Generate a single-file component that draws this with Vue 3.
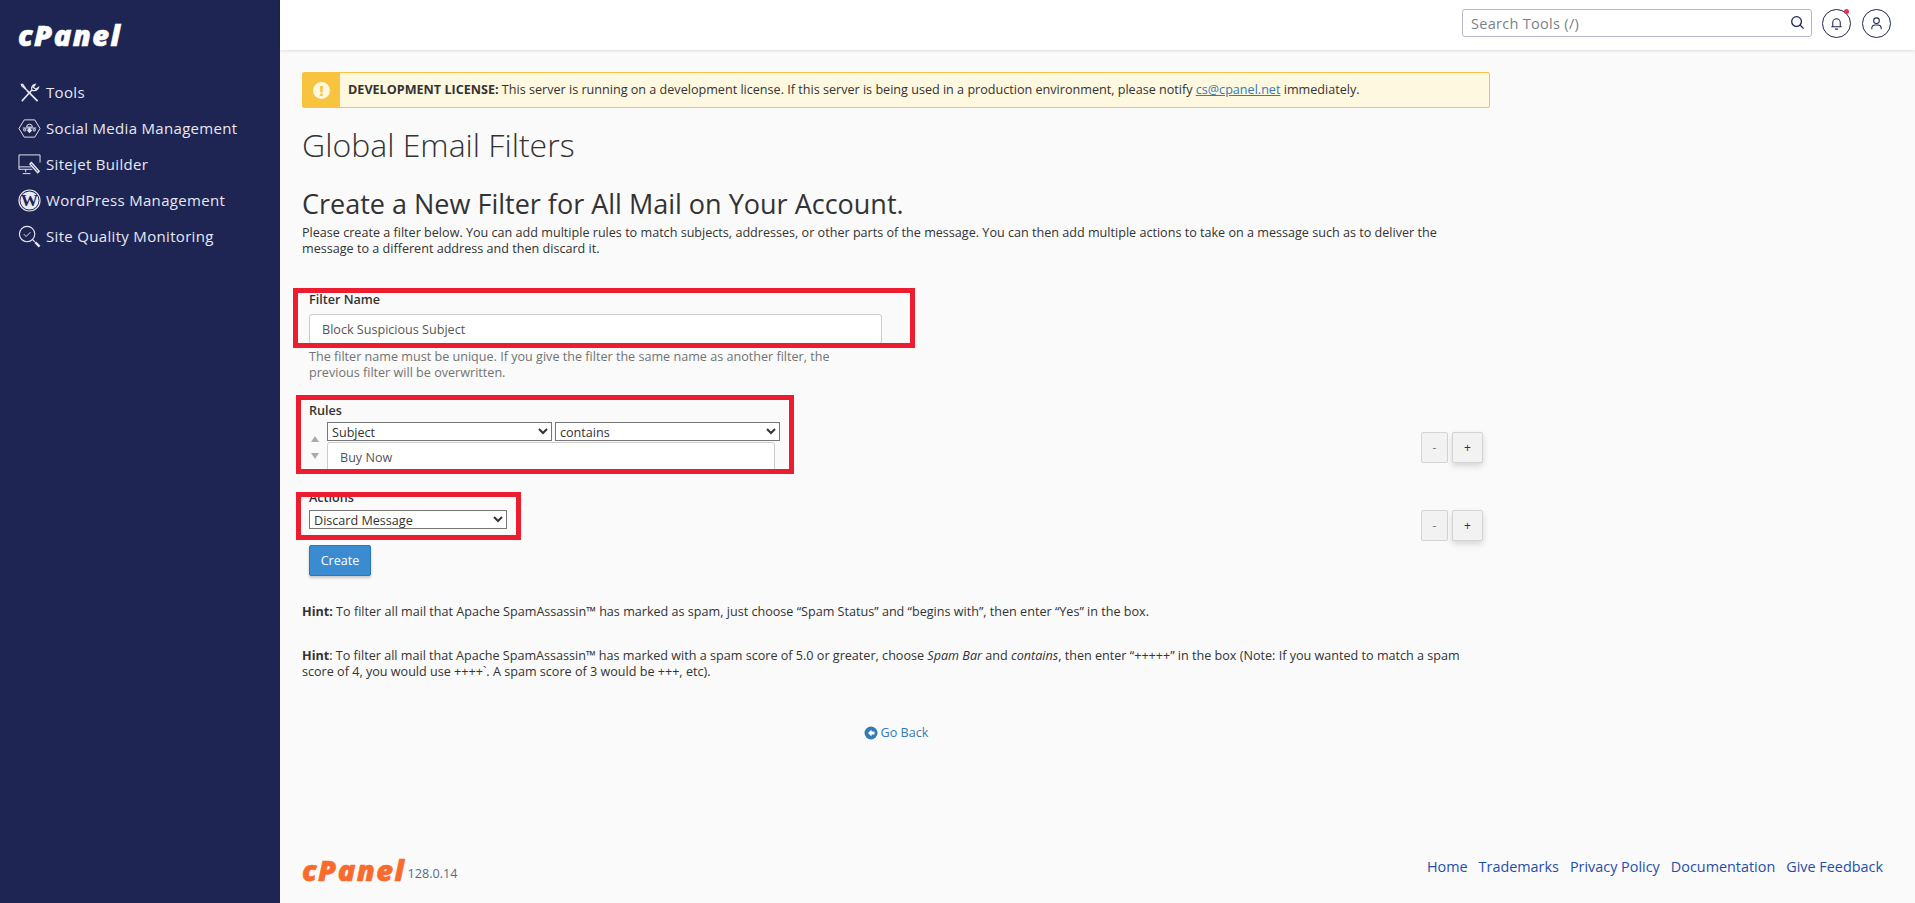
<template>
  <div class="layout">
    <aside class="sidebar">
      <div class="logo">cPanel</div>
      <nav class="nav">
        <a v-for="item in navItems" :key="item.label" class="nav-item" href="#">
          <svg class="nav-icon" viewBox="0 0 24 24" fill="none" stroke="#e6e8f2" stroke-width="1" v-html="item.icon"></svg>
          <span>{{ item.label }}</span>
        </a>
      </nav>
    </aside>

    <div class="main">
      <header class="topbar">
        <div class="search">
          <input type="text" placeholder="Search Tools (/)" />
          <svg viewBox="0 0 16 16" fill="none" stroke="#1f2552" stroke-width="1.4">
            <circle cx="7" cy="7" r="5.2" />
            <path d="M11 11l3.5 3.5" />
          </svg>
        </div>
        <button class="round-btn">
          <svg viewBox="0 0 16 16" fill="none" stroke="#1f2552" stroke-width="1.1">
            <path d="M4 11.5V7a4 4 0 0 1 8 0v4.500M2.500 11.500h11M6.500 14h3" />
          </svg>
          <span class="dot"></span>
        </button>
        <button class="round-btn">
          <svg viewBox="0 0 16 16" fill="none" stroke="#1f2552" stroke-width="1.1">
            <circle cx="8" cy="5" r="3" />
            <path d="M3 14v-1.500a3.500 3.500 0 0 1 3.500-3h3a3.500 3.500 0 0 1 3.500 3V14" />
          </svg>
        </button>
      </header>

      <main class="content">
        <div class="alert">
          <div class="alert-icon"><span>!</span></div>
          <p>
            <strong>DEVELOPMENT LICENSE:</strong> This server is running on a development license. If this server is being used in a production environment, please notify
            <a href="#">cs@cpanel.net</a> immediately.
          </p>
        </div>

        <h1>Global Email Filters</h1>
        <h2>Create a New Filter for All Mail on Your Account.</h2>
        <p class="intro">
          Please create a filter below. You can add multiple rules to match subjects, addresses, or other parts of the message. You can then add multiple actions to take on a message such as to deliver the message to a different address and then discard it.
        </p>

        <form class="form" @submit.prevent>
          <div class="field field-name">
            <label>Filter Name</label>
            <input v-model="filterName" class="text-input" type="text" />
            <p class="help">The filter name must be unique. If you give the filter the same name as another filter, the previous filter will be overwritten.</p>
            <span class="mark mark-name"></span>
          </div>

          <div class="field field-rules">
            <label>Rules</label>
            <div class="rule-row">
              <div class="arrows">
                <span class="up"></span>
                <span class="down"></span>
              </div>
              <div class="rule-body">
                <div class="selects">
                  <select v-model="ruleSubject">
                    <option>Subject</option>
                    <option>From</option>
                    <option>To</option>
                  </select>
                  <select v-model="ruleMatch">
                    <option>contains</option>
                    <option>begins with</option>
                  </select>
                </div>
                <input v-model="ruleValue" class="text-input rule-input" type="text" />
              </div>
              <div class="stepper stepper-rules">
                <button class="step" type="button">-</button>
                <button class="step step-plus" type="button">+</button>
              </div>
            </div>
            <span class="mark mark-rules"></span>
          </div>

          <div class="field field-actions">
            <label>Actions</label>
            <div class="action-row">
              <select v-model="action" class="action-select">
                <option>Discard Message</option>
                <option>Redirect to Email</option>
              </select>
              <div class="stepper">
                <button class="step" type="button">-</button>
                <button class="step step-plus" type="button">+</button>
              </div>
            </div>
            <span class="mark mark-actions"></span>
          </div>

          <button class="create" type="submit">Create</button>
        </form>

        <p class="hint"><strong>Hint:</strong> To filter all mail that Apache SpamAssassin™ has marked as spam, just choose “Spam Status” and “begins with”, then enter “Yes” in the box.</p>
        <p class="hint"><strong>Hint</strong>: To filter all mail that Apache SpamAssassin™ has marked with a spam score of 5.0 or greater, choose <em>Spam Bar</em> and <em>contains</em>, then enter “+++++” in the box (Note: If you wanted to match a spam score of 4, you would use ++++`. A spam score of 3 would be +++, etc).</p>

        <div class="back">
          <a href="#">
            <svg viewBox="0 0 14 14">
              <circle cx="7" cy="7" r="6.500" fill="#337ab7" />
              <path d="M7.500 3.500L4 7l3.500 3.500V8.500h3v-3h-3z" fill="#fff" />
            </svg>
            Go Back
          </a>
        </div>
      </main>

      <footer class="footer">
        <div class="brand">
          <span class="brand-logo">cPanel</span>
          <span class="version">128.0.14</span>
        </div>
        <div class="links">
          <a v-for="link in footerLinks" :key="link" href="#">{{ link }}</a>
        </div>
      </footer>
    </div>
  </div>
</template>

<script setup>
import { ref } from 'vue'

const filterName = ref('Block Suspicious Subject')
const ruleSubject = ref('Subject')
const ruleMatch = ref('contains')
const ruleValue = ref('Buy Now')
const action = ref('Discard Message')

const footerLinks = ['Home', 'Trademarks', 'Privacy Policy', 'Documentation', 'Give Feedback']

const navItems = [
  {
    label: 'Tools',
    icon: '<path stroke-width="1.6" d="M4 21L14.500 9.500" /><path stroke-width="1.300" d="M14.500 9.500C13.500 6.500 15 4 18 3.500l-2 3 2.500 2 3-2C21 9.500 18 11 14.500 9.500z" /><path stroke-width="1.800" d="M9 9.500L20.500 21" /><path stroke-width="1.300" d="M9 9.500L4 5 3.500 3.500 5 3.500 9 9.500" />'
  },
  {
    label: 'Social Media Management',
    icon: '<path d="M6.500 3h11L23 12l-5.500 9h-11L1 12z" /><path d="M9 10.500a3 3 0 0 1 6 0zM5 11.500h14" /><circle cx="7" cy="13.500" r="1.200" /><circle cx="17" cy="13.500" r="1.200" /><path d="M12 11.500l2.200 2.500-2.200 2.500-2.200-2.500z" fill="#e6e8f2" />'
  },
  {
    label: 'Sitejet Builder',
    icon: '<path d="M23 10V2H1v15h14M8 17v3M5 21.500h8M1 14.500h13" /><path stroke-width="1.500" d="M14 10l8 9-1.500 1.500-8-9z" />'
  },
  {
    label: 'WordPress Management',
    icon: '<circle cx="12" cy="12" r="11" stroke-width="1.200" /><circle cx="12" cy="12" r="9.500" fill="#e6e8f2" stroke="none" /><text x="12" y="18" text-anchor="middle" font-family="Liberation Serif, serif" font-size="18" font-weight="700" fill="#1f2552" stroke="none">W</text>'
  },
  {
    label: 'Site Quality Monitoring',
    icon: '<circle cx="9.500" cy="9.500" r="8" stroke-width="1.200" /><path d="M6 9.500l2.500 2.500 4.500-4.500" /><path stroke-width="1.200" d="M15.500 15.500l2 2" /><path stroke-width="2.500" d="M18 18l4.500 4.500" />'
  }
]
</script>

<style scoped>
.layout {
  display: flex;
  min-height: 903px;
  font-family: "Open Sans", sans-serif;
  color: #333;
  background: #fafafa;
}

.sidebar {
  width: 280px;
  flex: none;
  background: #1f2552;
  color: #e6e8f2;
}

.logo {
  padding: 18px 0 0 18px;
  height: 52px;
  font-size: 29px;
  line-height: 34px;
  font-weight: 800;
  font-style: italic;
  color: #fff;
  letter-spacing: 1.5px;
  -webkit-text-stroke: 0.6px #fff;
}

.nav {
  padding-top: 4px;
}

.nav-item {
  display: flex;
  align-items: center;
  height: 36px;
  padding-left: 18px;
  gap: 5px;
  font-size: 15px;
  letter-spacing: 0.32px;
  color: #e6e8f2;
  text-decoration: none;
}

.nav-icon {
  width: 23px;
  height: 23px;
}

.main {
  flex: 1;
  min-width: 0;
  display: flex;
  flex-direction: column;
}

.topbar {
  height: 50px;
  flex: none;
  box-sizing: border-box;
  background: #fff;
  box-shadow: 0 1px 3px rgba(0, 0, 0, 0.12);
  display: flex;
  align-items: center;
  justify-content: flex-end;
  gap: 11px;
  padding: 0 24px 4px 0;
}

.search {
  position: relative;
  width: 350px;
  height: 28px;
  margin-right: -1px;
}

.search input {
  width: 100%;
  height: 100%;
  box-sizing: border-box;
  border: 1px solid #b6b9cc;
  border-radius: 3px;
  padding: 0 8px;
  font: 14.500px "Open Sans", sans-serif;
  letter-spacing: 0.3px;
}

.search input::placeholder {
  color: #7b7f8c;
}

.search svg {
  position: absolute;
  right: 7px;
  top: 6px;
  width: 15px;
  height: 15px;
}

.round-btn {
  position: relative;
  width: 29px;
  height: 29px;
  box-sizing: border-box;
  padding: 0;
  border: 1px solid #1f2552;
  border-radius: 50%;
  background: #fff;
  display: flex;
  align-items: center;
  justify-content: center;
}

.round-btn svg {
  width: 15px;
  height: 15px;
}

.dot {
  position: absolute;
  top: -1px;
  right: 1px;
  width: 5px;
  height: 5px;
  border-radius: 50%;
  background: #e8304a;
}

.content {
  width: 1188px;
  margin-left: 22px;
  padding-top: 22px;
  font-size: 12.600px;
  line-height: 16px;
}

.alert {
  display: flex;
  align-items: center;
  height: 36px;
  box-sizing: border-box;
  border: 1px solid #f8c33f;
  border-radius: 2px;
  background: #fef8e1;
}

.alert-icon {
  width: 37px;
  height: 100%;
  flex: none;
  background: #f8c33f;
  display: flex;
  align-items: center;
  justify-content: center;
  margin-right: 8px;
}

.alert-icon span {
  width: 17px;
  height: 17px;
  border-radius: 50%;
  background: #fef8e1;
  color: #f8c33f;
  font-size: 14px;
  font-weight: 800;
  line-height: 17px;
  text-align: center;
}

.alert p {
  margin: 0;
}

a {
  color: #337ab7;
}

h1 {
  margin: 17px 0 0;
  font-size: 32px;
  line-height: 40px;
  font-weight: 300;
}

h2 {
  margin: 21px 0 0;
  font-size: 27px;
  line-height: 36px;
  font-weight: 500;
}

.intro {
  margin: 3px 0 0;
}

.form {
  margin-top: 35px;
}

.field {
  position: relative;
  padding-left: 7px;
}

label {
  display: block;
  font-weight: 600;
  line-height: 16px;
}

.text-input {
  display: block;
  box-sizing: border-box;
  border: 1px solid #ccc;
  border-radius: 3px;
  background: #fff;
  color: #555;
  font: 12.600px "Open Sans", sans-serif;
  padding: 0 12px;
}

.field-name .text-input {
  width: 573px;
  height: 30px;
  margin-top: 6px;
}

.help {
  width: 573px;
  margin: 5px 0 0;
  color: #737373;
}

.mark {
  position: absolute;
  box-sizing: border-box;
  border: 5px solid #ed1c2e;
  pointer-events: none;
}

.mark-name {
  left: -9px;
  top: -4px;
  width: 622px;
  height: 60px;
}

.field-rules {
  margin-top: 22px;
}

.rule-row {
  display: flex;
  margin-top: 3px;
}

.arrows {
  width: 18px;
  flex: none;
  padding-top: 14px;
}

.arrows span {
  display: block;
  width: 0;
  height: 0;
  margin-left: 2px;
  border-left: 4px solid transparent;
  border-right: 4px solid transparent;
}

.arrows .up {
  border-bottom: 6px solid #aaa;
}

.arrows .down {
  margin-top: 11px;
  border-top: 6px solid #aaa;
}

.selects {
  display: flex;
  gap: 3px;
}

select {
  display: block;
  height: 19px;
  box-sizing: border-box;
  border: 1px solid #767676;
  border-radius: 0;
  font: 12.600px "Open Sans", sans-serif;
  background-color: #fff;
  color: #333;
}

.selects select {
  width: 225px;
}

.rule-input {
  width: 448px;
  height: 30px;
  margin-top: 1px;
}

.stepper {
  display: flex;
  gap: 4px;
  margin-left: auto;
  margin-right: 7px;
}

.stepper-rules {
  padding-top: 10px;
  align-self: flex-start;
}

.step {
  width: 27px;
  height: 31px;
  padding: 0;
  border: 1px solid #d4d4d4;
  border-radius: 2px;
  background: #f2f2f2;
  color: #777;
  font: 12px "Open Sans", sans-serif;
}

.step-plus {
  width: 31px;
  color: #333;
  box-shadow: 0 3px 6px rgba(0, 0, 0, 0.15);
}

.field-actions {
  margin-top: 18px;
}

.action-row {
  display: flex;
  align-items: flex-start;
  margin-top: 4px;
}

.action-select {
  width: 198px;
}

.mark-rules {
  left: -6px;
  top: -8px;
  width: 498px;
  height: 79px;
}

.mark-actions {
  left: -6px;
  top: 2px;
  width: 225px;
  height: 48px;
}

.create {
  display: block;
  margin: 4px 0 0 7px;
  width: 62px;
  height: 31px;
  border: 1px solid #2a78b8;
  border-radius: 2px;
  background: #3a8bd0;
  color: #fff;
  font: 12.600px "Open Sans", sans-serif;
  box-shadow: 0 2px 3px rgba(0, 0, 0, 0.2);
}

.hint {
  margin: 28px 0 0;
}

.back {
  margin-top: 45px;
  text-align: center;
}

.back a {
  display: inline-flex;
  align-items: center;
  gap: 3px;
  text-decoration: none;
}

.back svg {
  width: 14px;
  height: 14px;
}

.footer {
  margin-top: auto;
  height: 60px;
  display: flex;
  align-items: flex-start;
  justify-content: space-between;
  padding: 0 32px 0 22px;
}

.brand {
  display: flex;
  align-items: flex-end;
  gap: 2px;
  padding-top: 12px;
}

.brand-logo {
  font-size: 29px;
  line-height: 30px;
  font-weight: 800;
  font-style: italic;
  color: #f96a2c;
  letter-spacing: 1.5px;
  -webkit-text-stroke: 0.6px #f96a2c;
}

.version {
  font-size: 12.600px;
  line-height: 22px;
  color: #5b6b7d;
}

.links {
  display: flex;
  gap: 11px;
  font-size: 14.400px;
  line-height: 20px;
  padding-top: 14px;
}

.links a {
  color: #1f4fa8;
  text-decoration: none;
}
</style>

<style>
body {
  margin: 0;
  background: #fafafa;
}
</style>
